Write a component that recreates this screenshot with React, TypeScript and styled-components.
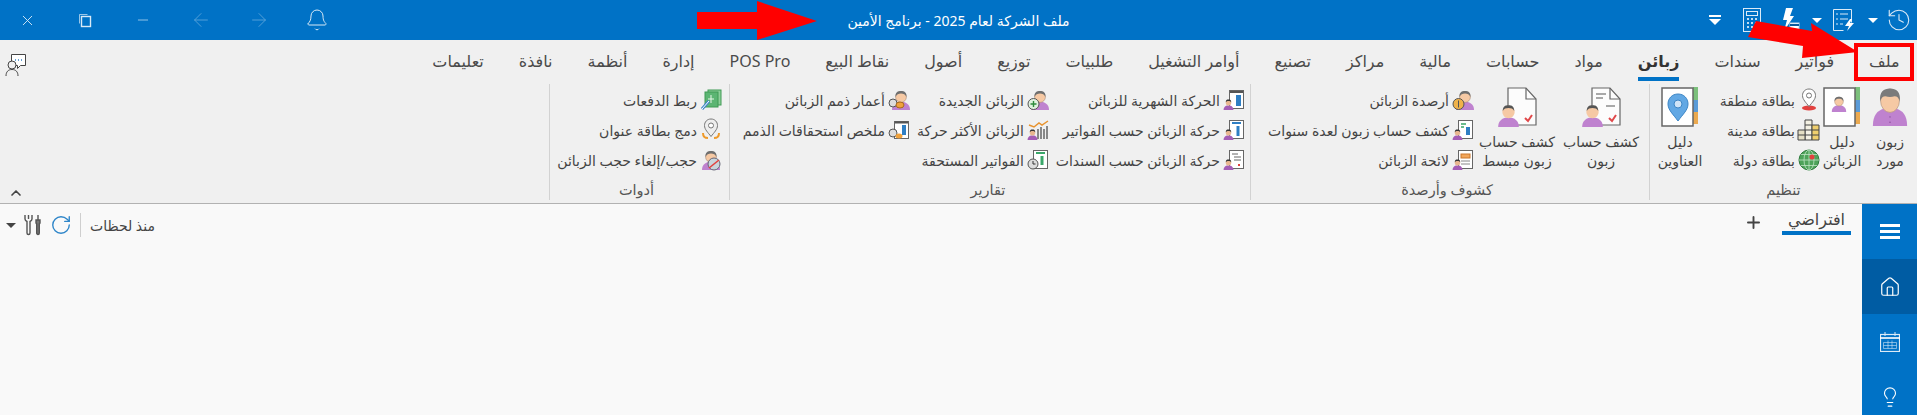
import * as React from "react";
import styled, { createGlobalStyle } from "styled-components";
import { ArrowLeft, ArrowRight, Bell, ChevronUp, History, House, Lightbulb, Minus, Plus, RotateCw, X } from "lucide-react";

const GlobalStyle = createGlobalStyle`
  html, body { margin: 0; padding: 0; background: #f9f9f9; }
  #root { width: 1917px; height: 415px; overflow: hidden; }
  * { box-sizing: border-box; }
`;

const Page = styled.div`
  position: relative;
  width: 1917px;
  height: 415px;
  display: flex;
  flex-direction: column;
  font-family: "Noto Sans", "DejaVu Sans", sans-serif;
  color: #444;
  overflow: hidden;
`;

const TitleBar = styled.div`
  height: 40px;
  flex: none;
  background: #0072c6;
  color: #fff;
  display: grid;
  grid-template-columns: 1fr auto 1fr;
  align-items: center;
`;

const TitleLeft = styled.div`
  display: flex;
  gap: 4px;
`;

const WinButton = styled.div<{ $dim?: boolean }>`
  width: 54px;
  height: 40px;
  display: flex;
  align-items: center;
  justify-content: center;
  opacity: ${(p) => (p.$dim ? 0.35 : 0.85)};
`;

const TitleText = styled.div`
  direction: rtl;
  font-size: 14px;
  white-space: nowrap;
`;

const TitleRight = styled.div`
  display: flex;
  justify-content: flex-end;
  align-items: center;
  padding-right: 3px;
`;

const QuickSlot = styled.div<{ $w: number }>`
  width: ${(p) => p.$w}px;
  height: 40px;
  display: flex;
  align-items: center;
  justify-content: center;
`;

const Caret = styled.span<{ $color?: string }>`
  display: inline-block;
  width: 0;
  height: 0;
  border-left: 5px solid transparent;
  border-right: 5px solid transparent;
  border-top: 5px solid ${(p) => p.$color || "#fff"};
`;

const Ribbon = styled.div`
  height: 164px;
  flex: none;
  background: #f0f0f0;
  border-bottom: 1px solid #b2b2b2;
  display: flex;
  flex-direction: column;
`;

const TabRow = styled.div`
  height: 44px;
  flex: none;
  direction: rtl;
  display: flex;
  align-items: flex-start;
  padding: 0 0 0 5px;
`;

const TabItem = styled.div`
  height: 41px;
  flex: none;
  padding: 0 17.5px;
  display: flex;
  justify-content: center;
  font-size: 16px;
  line-height: 22px;
  white-space: nowrap;
`;

const TabLabel = styled.span<{ $active?: boolean }>`
  height: 41px;
  padding-top: 10px;
  font-weight: ${(p) => (p.$active ? 700 : 400)};
  color: ${(p) => (p.$active ? "#333" : "#4a4a4a")};
  border-bottom: 4px solid ${(p) => (p.$active ? "#0072c6" : "transparent")};
`;

const FeedbackSlot = styled.div`
  margin-right: auto;
  padding-top: 13px;
`;

const GroupRow = styled.div`
  flex: 1;
  direction: rtl;
  display: flex;
  padding-bottom: 3px;
`;

const Group = styled.div<{ $w: number; $pad?: number }>`
  width: ${(p) => p.$w}px;
  flex: none;
  display: flex;
  flex-direction: column;
  border-left: 1px solid #d2d2d2;
  padding-right: ${(p) => p.$pad || 0}px;
`;

const GroupBody = styled.div`
  flex: 1;
  display: flex;
  min-height: 0;
`;

const GroupLabel = styled.div`
  height: 22px;
  font-size: 14.5px;
  text-align: center;
  color: #555;
  line-height: 22px;
`;

const CollapseArea = styled.div`
  flex: 1;
  display: flex;
  align-items: flex-end;
  justify-content: flex-end;
  padding: 0 0 0 8px;
  margin-bottom: -1px;
  color: #444;
`;

const BigButton = styled.div<{ $w: number }>`
  width: ${(p) => p.$w}px;
  flex: none;
  display: flex;
  flex-direction: column;
  align-items: center;
  padding-top: 3px;
  font-size: 14px;
  line-height: 19px;
  text-align: center;
  white-space: nowrap;
`;

const BigLabel = styled.div`
  margin-top: 5px;
`;

const SmallColumn = styled.div<{ $w: number }>`
  width: ${(p) => p.$w}px;
  flex: none;
  display: flex;
  flex-direction: column;
  padding-top: 1px;
`;

const SmallItem = styled.div`
  height: 30px;
  display: flex;
  align-items: center;
  gap: 2px;
  font-size: 14px;
  white-space: nowrap;
`;

const SmallIcon = styled.div`
  width: 24px;
  height: 24px;
  flex: none;
  display: flex;
  align-items: center;
  justify-content: center;
`;

const Content = styled.div`
  flex: 1;
  display: flex;
  background: #f9f9f9;
  min-height: 0;
`;

const Main = styled.div`
  flex: 1;
  display: flex;
  justify-content: space-between;
  align-items: flex-start;
  padding: 0 11px 0 6px;
`;

const Toolbar = styled.div`
  height: 40px;
  display: flex;
  align-items: center;
  gap: 8px;
  padding-top: 2px;
`;

const ToolDivider = styled.div`
  width: 1px;
  height: 24px;
  background: #cfcfcf;
`;

const TimeAgo = styled.div`
  direction: rtl;
  font-size: 14px;
  margin-left: 1px;
`;

const PageTabs = styled.div`
  display: flex;
  align-items: flex-start;
  gap: 19px;
`;

const PageTab = styled.div`
  width: 69px;
  height: 31px;
  border-bottom: 4px solid #0072c6;
  text-align: center;
  direction: rtl;
  font-size: 16px;
  line-height: 22px;
  padding-top: 4px;
  color: #444;
`;

const AddSlot = styled.div`
  padding-top: 9px;
  color: #444;
  display: flex;
`;

const SideBar = styled.div`
  width: 55px;
  flex: none;
  background: #0072c6;
  display: flex;
  flex-direction: column;
`;

const SideItem = styled.div<{ $active?: boolean }>`
  height: 55px;
  flex: none;
  display: flex;
  align-items: center;
  justify-content: center;
  color: #fff;
  background: ${(p) => (p.$active ? "#005ca3" : "transparent")};
`;

const Hamburger = styled.div`
  width: 20px;
  height: 15px;
  border-top: 3px solid #fff;
  border-bottom: 3px solid #fff;
  position: relative;
  &::after {
    content: "";
    position: absolute;
    left: 0;
    right: 0;
    top: 3px;
    height: 3px;
    background: #fff;
  }
`;

const RedBox = styled.div`
  position: absolute;
  left: 1854px;
  top: 43px;
  width: 60px;
  height: 38px;
  border: 4px solid #f00;
`;

const ArrowOverlay = styled.svg`
  position: absolute;
  left: 0;
  top: 0;
  pointer-events: none;
`;

/* ---- drawings ---- */

const skin = "#f6c9a4";
const purple = "#bf82cf";

const Bust = ({ x = 0, y = 0, s = 1 }: { x?: number; y?: number; s?: number }) => (
  <g transform={`translate(${x} ${y}) scale(${s})`}>
    <path d="M1 20c0-5 3-7 6-8h6c3 1 6 3 6 8z" fill={purple} />
    <circle cx="10" cy="7" r="5.4" fill={skin} stroke="#a98a74" strokeWidth=".6" />
    <path d="M4.6 7C4 2 7 1 10 1s6 1 5.4 6c-1-3-3-3.5-5.4-3.5S5.6 4 4.6 7z" fill="#6f6f6f" />
  </g>
);

const DarkBust = ({ x = 0, y = 0, s = 0.55 }: { x?: number; y?: number; s?: number }) => (
  <g transform={`translate(${x} ${y}) scale(${s})`}>
    <path d="M1 20c0-5 3-7 6-8h6c3 1 6 3 6 8z" fill="#a45db5" />
    <circle cx="10" cy="7" r="5" fill="#e8b68f" />
    <path d="M5 6C5 2 7 1 10 1s5 1 5 5c-1-2-3-2.5-5-2.5S6 4 5 6z" fill="#333" />
  </g>
);

const Sheet = ({ children }: { children?: React.ReactNode }) => (
  <svg width="22" height="22" viewBox="0 0 22 22">
    <rect x="6.5" y="1.5" width="14" height="18" fill="#fff" stroke="#666" />
    {children}
    <DarkBust x={0} y={10} />
  </svg>
);

const BigPerson = () => (
  <svg width="36" height="40" viewBox="0 0 40 44">
    <path d="M1 43c0-12 5-17 12-19h14c7 2 12 7 12 19z" fill={purple} />
    <path d="M14 24c2 3 10 3 12 0l-1-5H15z" fill={skin} />
    <ellipse cx="20" cy="15" rx="10.5" ry="13" fill={skin} stroke="#b08f78" strokeWidth=".7" />
    <path d="M9 16C8 5 13 1.5 20 1.5S32 5 31 16c-1-4-3-6-6-6-3 1-7 1-10 0-3 0-5 2-6 6z" fill="#7b7b7b" />
    <circle cx="20" cy="33" r=".8" fill="#8a4f9a" />
    <circle cx="20" cy="39" r=".8" fill="#8a4f9a" />
  </svg>
);

const Book = ({ children }: { children: React.ReactNode }) => (
  <svg width="38" height="40" viewBox="0 0 38 40">
    <rect x="32" y="0" width="5" height="13" fill="#7cc07c" />
    <rect x="32" y="13" width="5" height="12" fill="#5a9bd8" />
    <rect x="32" y="25" width="5" height="12" fill="#eba94f" />
    <rect x="1" y="1" width="31" height="38" fill="#fff" stroke="#666" strokeWidth="1.5" />
    {children}
  </svg>
);

const BigStatement = ({ lines }: { lines?: boolean }) => (
  <svg width="40" height="40" viewBox="0 0 40 40">
    <path d="M11 1h18l10 11v26H11z" fill="#fcfcfc" stroke="#666" strokeWidth="1.2" />
    <path d="M29 1v11h10" fill="none" stroke="#666" strokeWidth="1.2" />
    {lines && <path d="M15 7h10M15 11h7M25 19h9" stroke="#555" strokeWidth="1.2" />}
    <path d="M28 31l3 3 4-6" fill="none" stroke="#e0484a" strokeWidth="2" />
    <g transform="translate(0 17) scale(1.15)">
      <path d="M1 20c0-5 3-7 6-8h6c3 1 6 3 6 8z" fill={purple} />
      <circle cx="10" cy="7" r="5.4" fill={skin} />
      <path d="M5 6C5 2 7 1 10 1s5 1 5 5c-1-2-3-2.5-5-2.5S6 4 5 6z" fill="#555" />
    </g>
  </svg>
);

const Pin = ({ fill = "#fff", stroke = "#777" }: { fill?: string; stroke?: string }) => (
  <path d="M11 1c4 0 6.5 3 6.5 6.5 0 4-3.5 7-6.5 11-3-4-6.5-7-6.5-11C4.5 4 7 1 11 1z" fill={fill} stroke={stroke} />
);

type SmallKind =
  | "region" | "city" | "country" | "balance" | "multi" | "list"
  | "monthly" | "byInvoice" | "byVoucher" | "newCust" | "active" | "due"
  | "aging" | "summary" | "link" | "merge" | "block";

const Small = ({ kind }: { kind: SmallKind }) => {
  switch (kind) {
    case "region":
      return (
        <svg width="22" height="24" viewBox="0 0 22 24">
          <ellipse cx="11" cy="20" rx="7" ry="2.5" fill="#e2413f" />
          <Pin />
          <circle cx="11" cy="7.5" r="2.5" fill="none" stroke="#777" />
        </svg>
      );
    case "city":
      return (
        <svg width="24" height="24" viewBox="0 0 24 24">
          <path d="M8 2h7v20H8z" fill="#f4f1e4" stroke="#444" />
          <path d="M15 7h7v15h-7z" fill="#efcf6e" stroke="#444" />
          <path d="M1 12h7v10H1z" fill="#e5dfc4" stroke="#444" />
          <path d="M1 17h21M8 7h7M8 12h14" stroke="#444" />
        </svg>
      );
    case "country":
      return (
        <svg width="22" height="22" viewBox="0 0 22 22">
          <circle cx="11" cy="11" r="10" fill="#4ea35a" stroke="#2d7a3c" />
          <path d="M1 11h20M11 1v20M3 5.5h16M3 16.5h16" stroke="#bfe3c4" strokeWidth=".8" />
          <ellipse cx="11" cy="11" rx="5" ry="10" fill="none" stroke="#bfe3c4" strokeWidth=".8" />
          <circle cx="14" cy="8" r="2.5" fill="#e2413f" />
        </svg>
      );
    case "balance":
      return (
        <svg width="22" height="22" viewBox="0 0 22 22">
          <Bust x={3} y={1} />
          <circle cx="6.5" cy="15" r="5.5" fill="#f0b24a" stroke="#555" />
          <path d="M6.5 11.5v7" stroke="#555" />
        </svg>
      );
    case "multi":
      return (
        <Sheet>
          <path d="M9 5h5M9 8h3" stroke="#3aa76a" strokeWidth="1.5" />
          <rect x="14" y="8" width="4" height="8" fill="#2f7fc4" />
        </Sheet>
      );
    case "list":
      return (
        <Sheet>
          <rect x="9" y="5" width="9" height="4" fill="#f2a65a" stroke="#c9772c" />
          <path d="M9 12h9M9 15h9" stroke="#888" />
        </Sheet>
      );
    case "monthly":
      return (
        <Sheet>
          <path d="M7 3h13" stroke="#555" strokeWidth="2" />
          <rect x="13" y="6" width="5" height="11" fill="#2f7fc4" />
        </Sheet>
      );
    case "byInvoice":
      return (
        <Sheet>
          <path d="M9 4h9" stroke="#2f7fc4" strokeWidth="2" />
          <path d="M15 7v10" stroke="#2f7fc4" strokeWidth="3" />
        </Sheet>
      );
    case "byVoucher":
      return (
        <Sheet>
          <path d="M9 5h6M11 8h7M11 11h7" stroke="#666" />
          <rect x="15" y="15" width="2" height="2" fill="#e2413f" />
        </Sheet>
      );
    case "newCust":
      return (
        <svg width="22" height="22" viewBox="0 0 22 22">
          <Bust x={3} y={1} />
          <circle cx="6.5" cy="15" r="5.5" fill="#dff0df" stroke="#555" />
          <path d="M6.5 12v6M3.5 15h6" stroke="#2d8a3c" strokeWidth="1.4" />
        </svg>
      );
    case "active":
      return (
        <svg width="22" height="22" viewBox="0 0 22 22">
          <path d="M11 10v10M14 8v12M17 10v10M20 7v13" stroke="#666" strokeWidth="1.5" />
          <path d="M2 6l5 2 5-4 3 2 6-4" fill="none" stroke="#e8932e" strokeWidth="1.5" />
          <DarkBust x={0} y={10} />
        </svg>
      );
    case "due":
      return (
        <svg width="22" height="22" viewBox="0 0 22 22">
          <rect x="6.5" y="1.5" width="14" height="18" fill="#fff" stroke="#666" />
          <path d="M9 4h9" stroke="#3aa76a" strokeWidth="2" />
          <path d="M15 7v9" stroke="#3aa76a" strokeWidth="3" />
          <circle cx="6" cy="15" r="5" fill="#ddd" stroke="#555" />
          <path d="M6 12v3h2.5" fill="none" stroke="#333" />
        </svg>
      );
    case "aging":
      return (
        <svg width="22" height="22" viewBox="0 0 22 22">
          <Bust x={3} y={1} />
          <circle cx="5" cy="14" r="4" fill="#ddd" stroke="#555" />
          <ellipse cx="12" cy="16" rx="4" ry="3" fill="#f0a23c" stroke="#a86a1c" />
        </svg>
      );
    case "summary":
      return (
        <svg width="22" height="22" viewBox="0 0 22 22">
          <rect x="6.5" y="2.5" width="14" height="17" fill="#fff" stroke="#666" />
          <path d="M7 3.5h13" stroke="#555" strokeWidth="2" />
          <rect x="14" y="6" width="4" height="10" fill="#2f7fc4" />
          <circle cx="5" cy="14" r="4" fill="#ddd" stroke="#555" />
          <ellipse cx="11" cy="17" rx="3.5" ry="2.5" fill="#f0a23c" />
        </svg>
      );
    case "link":
      return (
        <svg width="22" height="22" viewBox="0 0 22 22">
          <rect x="8" y="1" width="13" height="15" fill="#8fcf9a" stroke="#3f9a55" />
          <rect x="5" y="3" width="13" height="15" fill="#5cb573" stroke="#3f9a55" />
          <path d="M11 6v8M8 10h6" stroke="#e6f5e8" />
          <path d="M2 20l7-8" stroke="#3f86c9" strokeWidth="3" />
          <path d="M2 20l7-8" stroke="#fff" strokeWidth="1" />
        </svg>
      );
    case "merge":
      return (
        <svg width="22" height="24" viewBox="0 0 22 24">
          <Pin fill="#eee" />
          <circle cx="11" cy="7.5" r="2.5" fill="#fff" stroke="#777" />
          <path d="M3 15c0 5 3 5 5 5M19 15c0 5-3 5-5 5" fill="none" stroke="#ef9a2a" strokeWidth="2" />
        </svg>
      );
    case "block":
    default:
      return (
        <svg width="22" height="22" viewBox="0 0 22 22">
          <Bust x={1} y={1} />
          <circle cx="14" cy="15" r="6" fill="#c9d4dc" stroke="#667" />
          <path d="M9 19l10-8" stroke="#e2413f" strokeWidth="1.6" />
        </svg>
      );
  }
};

const FeedbackIcon = () => (
  <svg width="22" height="24" viewBox="0 0 22 24" fill="none" stroke="#444">
    <path d="M6.5 1.5h14v11h-5l-3 3v-3h-6z" fill="#fff" />
    <path d="M10 7h1M13 7h1M16 7h1" stroke="#2f7fc4" strokeWidth="1.4" />
    <circle cx="7" cy="12" r="4" fill="#f0f0f0" />
    <path d="M1 23c0-4 2-6.5 6-6.5s6 2.5 6 6.5" />
  </svg>
);

const CopyIcon = () => (
  <svg width="14" height="16" viewBox="0 0 14 16" fill="none" stroke="#fff">
    <path d="M1.5 11.5v-9h8" opacity=".7" />
    <rect x="3.5" y="4.5" width="9" height="10" strokeWidth="1.4" />
  </svg>
);

const CalcIcon = () => (
  <svg width="20" height="26" viewBox="0 0 20 26" fill="none" stroke="#dbeaf7">
    <rect x="1.5" y="1.5" width="17" height="23" />
    <rect x="4.5" y="4.5" width="11" height="4" />
    <path d="M5 12h2M9 12h2M13 12h2M5 16h2M9 16h2M13 16h2M5 20h2M9 20h2" stroke="#fff" strokeWidth="1.6" />
  </svg>
);

const FlashDocIcon = () => (
  <svg width="22" height="26" viewBox="0 0 22 26">
    <path d="M8 1h7l-3 8h4L6 24l3-11H5z" fill="#fff" />
    <rect x="12" y="16" width="9" height="8" fill="#fff" stroke="#bcd8ee" />
    <path d="M12 18h9" stroke="#0b5a9c" strokeWidth="2" />
  </svg>
);

const ChecklistIcon = () => (
  <svg width="24" height="24" viewBox="0 0 24 24" fill="none" stroke="#dbeaf7">
    <path d="M1.5 1.5h18v13M1.5 1.5v21h10" />
    <path d="M4 6h2M4 11h2M4 16h2M8 6h8M8 11h8M8 16h3" />
    <path d="M18 11l-5 7h4l-2 5 7-8h-4l2-4z" fill="#fff" stroke="none" />
  </svg>
);

const DropIcon = () => (
  <svg width="12" height="10" viewBox="0 0 12 10" fill="#fff">
    <rect x="0" y="0" width="12" height="2" />
    <path d="M0 4h12L6 10z" />
  </svg>
);

const ToolsIcon = () => (
  <svg width="18" height="22" viewBox="0 0 18 22" fill="none" stroke="#555" strokeWidth="1.4">
    <path d="M1 1v4c0 1.5 1 2 2 2.5V19c0 2 3 2 3 0V7.500C7 7 8 6.500 8 5V1M4.500 1v4" />
    <path d="M14 1v5M12 6h4v3l-.7 1v9c0 2-2.600 2-2.600 0v-9L12 9z" fill="#777" />
  </svg>
);

const CalendarIcon = () => (
  <svg width="20" height="20" viewBox="0 0 20 20" fill="none" stroke="#dcebf7">
    <rect x=".5" y="2.5" width="19" height="17" strokeWidth="1.2" />
    <path d="M0 6h20" stroke="#fff" strokeWidth="1.6" />
    <path d="M5 0v4M15 0v4" />
    <path d="M3.5 10.5h13v6h-13zM8 8.5v8M12 8.5v8M3.5 13.5h13" opacity=".55" />
  </svg>
);

/* ---- data ---- */

const tabs: { label: string; active?: boolean }[] = [
  { label: "ملف" },
  { label: "فواتير" },
  { label: "سندات" },
  { label: "زبائن", active: true },
  { label: "مواد" },
  { label: "حسابات" },
  { label: "مالية" },
  { label: "مراكز" },
  { label: "تصنيع" },
  { label: "أوامر التشغيل" },
  { label: "طلبيات" },
  { label: "توزيع" },
  { label: "أصول" },
  { label: "نقاط البيع" },
  { label: "POS Pro" },
  { label: "إدارة" },
  { label: "أنظمة" },
  { label: "نافذة" },
  { label: "تعليمات" },
];

const SmallEntry = ({ kind, text }: { kind: SmallKind; text: string }) => (
  <SmallItem>
    <SmallIcon>
      <Small kind={kind} />
    </SmallIcon>
    <span>{text}</span>
  </SmallItem>
);

const App = () => (
  <Page>
    <GlobalStyle />
    <TitleBar>
      <TitleLeft>
        <WinButton><X size={17} strokeWidth={1.3} /></WinButton>
        <WinButton><CopyIcon /></WinButton>
        <WinButton><Minus size={16} strokeWidth={1} /></WinButton>
        <WinButton $dim><ArrowLeft size={22} strokeWidth={1} /></WinButton>
        <WinButton $dim><ArrowRight size={22} strokeWidth={1} /></WinButton>
        <WinButton><Bell size={24} strokeWidth={1} /></WinButton>
      </TitleLeft>
      <TitleText>ملف الشركة لعام 2025 - برنامج الأمين</TitleText>
      <TitleRight>
        <QuickSlot $w={38}><DropIcon /></QuickSlot>
        <QuickSlot $w={36}><CalcIcon /></QuickSlot>
        <QuickSlot $w={38}><FlashDocIcon /></QuickSlot>
        <QuickSlot $w={18}><Caret /></QuickSlot>
        <QuickSlot $w={36}><ChecklistIcon /></QuickSlot>
        <QuickSlot $w={22}><Caret /></QuickSlot>
        <QuickSlot $w={30}><History size={26} strokeWidth={1} color="#dbeaf7" /></QuickSlot>
      </TitleRight>
    </TitleBar>

    <Ribbon>
      <TabRow>
        {tabs.map((t) => (
          <TabItem key={t.label}>
            <TabLabel $active={t.active}>{t.label}</TabLabel>
          </TabItem>
        ))}
        <FeedbackSlot><FeedbackIcon /></FeedbackSlot>
      </TabRow>
      <GroupRow>
        <Group $w={268}>
          <GroupBody>
            <BigButton $w={54}><BigPerson /><BigLabel>زبون<br />مورد</BigLabel></BigButton>
            <BigButton $w={42}>
              <Book><Bust x={8} y={9} s={0.8} /></Book>
              <BigLabel>دليل<br />الزبائن</BigLabel>
            </BigButton>
            <SmallColumn $w={111}>
              <SmallEntry kind="region" text="بطاقة منطقة" />
              <SmallEntry kind="city" text="بطاقة مدينة" />
              <SmallEntry kind="country" text="بطاقة دولة" />
            </SmallColumn>
            <BigButton $w={60}>
              <Book>
                <path d="M17 7c6 0 10 4.5 10 10 0 6-5 10-10 17C12 27 7 23 7 17 7 11.5 11 7 17 7z" fill="#62a8e4" stroke="#3d86c6" />
                <circle cx="17" cy="17" r="4" fill="#cfe4f7" stroke="#3d86c6" />
              </Book>
              <BigLabel>دليل<br />العناوين</BigLabel>
            </BigButton>
          </GroupBody>
          <GroupLabel>تنظيم</GroupLabel>
        </Group>

        <Group $w={399} $pad={6}>
          <GroupBody>
            <BigButton $w={84}><BigStatement lines /><BigLabel>كشف حساب<br />زبون</BigLabel></BigButton>
            <BigButton $w={84}><BigStatement /><BigLabel>كشف حساب<br />زبون مبسط</BigLabel></BigButton>
            <SmallColumn $w={220}>
              <SmallEntry kind="balance" text="أرصدة الزبائن" />
              <SmallEntry kind="multi" text="كشف حساب زبون لعدة سنوات" />
              <SmallEntry kind="list" text="لائحة الزبائن" />
            </SmallColumn>
          </GroupBody>
          <GroupLabel>كشوف وأرصدة</GroupLabel>
        </Group>

        <Group $w={521} $pad={4}>
          <GroupBody>
            <SmallColumn $w={196}>
              <SmallEntry kind="monthly" text="الحركة الشهرية للزبائن" />
              <SmallEntry kind="byInvoice" text="حركة الزبائن حسب الفواتير" />
              <SmallEntry kind="byVoucher" text="حركة الزبائن حسب السندات" />
            </SmallColumn>
            <SmallColumn $w={139}>
              <SmallEntry kind="newCust" text="الزبائن الجديدة" />
              <SmallEntry kind="active" text="الزبائن الأكثر حركة" />
              <SmallEntry kind="due" text="الفواتير المستحقة" />
            </SmallColumn>
            <SmallColumn $w={180}>
              <SmallEntry kind="aging" text="أعمار ذمم الزبائن" />
              <SmallEntry kind="summary" text="ملخص استحقاقات الذمم" />
            </SmallColumn>
          </GroupBody>
          <GroupLabel>تقارير</GroupLabel>
        </Group>

        <Group $w={180} $pad={6}>
          <GroupBody>
            <SmallColumn $w={170}>
              <SmallEntry kind="link" text="ربط الدفعات" />
              <SmallEntry kind="merge" text="دمج بطاقة عنوان" />
              <SmallEntry kind="block" text="حجب/إلغاء حجب الزبائن" />
            </SmallColumn>
          </GroupBody>
          <GroupLabel>أدوات</GroupLabel>
        </Group>

        <CollapseArea><ChevronUp size={16} strokeWidth={2.5} /></CollapseArea>
      </GroupRow>
    </Ribbon>

    <Content>
      <Main>
        <Toolbar>
          <Caret $color="#444" />
          <ToolsIcon />
          <RotateCw size={22} strokeWidth={1.5} color="#2f86c9" />
          <ToolDivider />
          <TimeAgo>منذ لحظات</TimeAgo>
        </Toolbar>
        <PageTabs>
          <AddSlot><Plus size={19} strokeWidth={2.4} /></AddSlot>
          <PageTab>افتراضي</PageTab>
        </PageTabs>
      </Main>
      <SideBar>
        <SideItem><Hamburger /></SideItem>
        <SideItem $active><House size={22} strokeWidth={1.3} /></SideItem>
        <SideItem><CalendarIcon /></SideItem>
        <SideItem><Lightbulb size={22} strokeWidth={1.2} /></SideItem>
      </SideBar>
    </Content>

    <RedBox />
    <ArrowOverlay width="1917" height="80" viewBox="0 0 1917 80">
      <path d="M697 12h60V1l60 20-60 19V29h-60z" fill="#f00" />
      <path d="M1756 21l56 10-1-8 47 29-56 6 1-12-55-9z" fill="#f00" />
    </ArrowOverlay>
  </Page>
);

export default App;
